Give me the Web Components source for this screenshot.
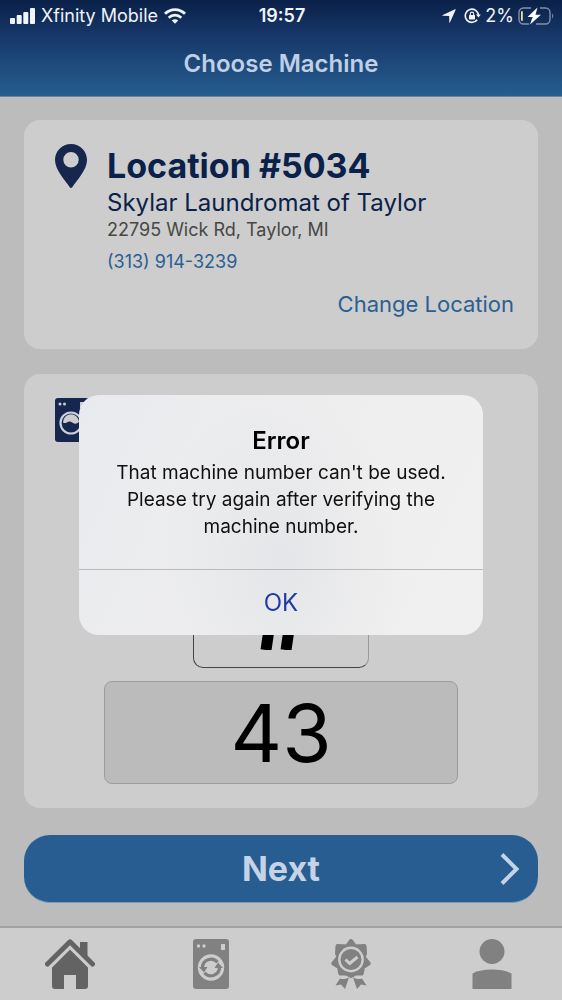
<!DOCTYPE html>
<html lang="en">
<head>
<meta charset="utf-8">
<meta name="viewport" content="width=device-width, initial-scale=1">
<title>Choose Machine</title>
<style>
  html, body { margin: 0; }
  body { font-family: Inter, "Liberation Sans", sans-serif; background: #bcbcbc; color: #0a2149; }
</style>
</head>
<body>
<laundry-app></laundry-app>
<script>
const define = (name, html) => {
  const template = document.createElement('template');
  template.innerHTML = html;
  customElements.define(name, class extends HTMLElement {
    constructor() {
      super();
      this.attachShadow({ mode: 'open' }).append(template.content.cloneNode(true));
    }
  });
};

define('status-bar', `
<style>
  :host { display: grid; grid-template-columns: 1fr auto 1fr; align-items: center; height: 32px; padding: 0 8px 0 10px; color: #f1f4f9; font-size: 18px; line-height: 24px; }
  div { display: flex; align-items: center; gap: 6px; }
  .right { justify-content: flex-end; gap: 4px; }
  .right svg:first-child { margin-right: 4px; }
  time { font-weight: 600; }
  svg { display: block; }
</style>
<div>
  <svg width="25" height="16" viewBox="0 0 25 16" fill="currentColor" aria-hidden="true"><rect y="10" width="5" height="6" rx="1"/><rect x="6.700" y="7" width="5" height="9" rx="1"/><rect x="13.300" y="4" width="5" height="12" rx="1"/><rect x="20" width="5" height="16" rx="1"/></svg>
  <span>Xfinity Mobile</span>
  <svg width="22" height="16" viewBox="0 0 22 16" fill="none" stroke="currentColor" stroke-width="2.800" aria-hidden="true"><path d="M1 5.800C6.700.2 15.300.2 21 5.800"/><path d="M4.700 9.700c3.700-3.400 8.900-3.400 12.600 0"/><path d="M7.800 12.400c1.900-1.700 4.500-1.700 6.400 0L11 15.800z" fill="currentColor" stroke="none"/></svg>
</div>
<time>19:57</time>
<div class="right">
  <svg width="14" height="14" viewBox="0 0 14 14" fill="currentColor" aria-hidden="true"><path d="M13.700.8 8 13.200q-.5 1-.7 0L7.200 6.900 1 6.800q-1.300-.1-.2-.8L13 .2q1-.3.700.6z"/></svg>
  <svg width="17" height="16" viewBox="0 0 17 16" fill="none" stroke="currentColor" stroke-width="1.600" aria-hidden="true"><path d="M13.200 11.700A6.600 6.600 0 1 1 14.500 7.500"/><path d="m12 6.500 2.500 3 2.300-3z" fill="currentColor" stroke="none"/><rect x="5" y="7" width="6" height="4.500" rx=".6" fill="currentColor" stroke="none"/><path d="M6.300 7.200V5.800a1.700 1.700 0 0 1 3.400 0v1.400" stroke-width="1.100"/></svg>
  <span>2%</span>
  <svg width="36" height="18" viewBox="0 0 36 18" aria-hidden="true"><path d="M13 1H5.500A4.500 4.500 0 0 0 1 5.500v7A4.500 4.500 0 0 0 5.500 17H11M22 1h5.500A4.500 4.500 0 0 1 32 5.500v7a4.500 4.500 0 0 1-4.500 4.500H18" fill="none" stroke="#8290a7" stroke-width="1.400"/><path d="M34.200 6.500c1.500.8 1.500 4.200 0 5z" fill="#8290a7"/><rect x="3" y="4" width="1.800" height="10" rx=".9" fill="#f0e09a"/><path d="M19.500.5 9.500 10h5.200L12 17.500 23 7.800h-5.500z" fill="#fff"/></svg>
</div>`);

define('app-header', `
<style>
  :host { display: block; background: linear-gradient(#0a2048, #17386a 38%, #265d8f); border-bottom: 1px solid #6f8296; }
  h1 { margin: 0; height: 64px; display: grid; place-items: center; color: #bfd0e6; font-size: 24px; line-height: 32px; font-weight: 600; }
</style>
<status-bar></status-bar>
<h1><slot></slot></h1>`);

define('app-card', `
<style>
  :host { display: block; box-sizing: border-box; background: #cdcdcd; border-radius: 16px; padding: 24px; }
</style>
<slot></slot>`);

define('location-details', `
<style>
  :host { display: grid; grid-template-columns: 32px 1fr; column-gap: 20px; padding: 0 0 7px 7px; }
  svg { display: block; }
  h2 { margin: 0; font-size: 34px; line-height: 44px; font-weight: 700; color: #0a2149; }
  p { margin: 0; }
  .name { font-size: 24px; line-height: 30px; }
  .street { font-size: 18px; line-height: 24px; color: #474747; }
  a { color: #2a5f92; text-decoration: none; }
  .phone { display: block; margin-top: 8px; font-size: 18px; line-height: 24px; }
  .change { grid-column: 1 / -1; justify-self: end; margin-top: 16px; font-size: 22px; line-height: 28px; }
</style>
<svg width="32" height="44" viewBox="0 0 32 44" aria-hidden="true"><path fill="#16264f" fill-rule="evenodd" d="M16 0C7 0 0 7 0 16c0 9.500 9.500 19.500 14.600 27q1.400 2 2.800 0C22.500 35.500 32 25.500 32 16 32 7 25 0 16 0zm0 8a7.700 7.700 0 1 1 0 15.400A7.700 7.700 0 0 1 16 8z"/></svg>
<div>
  <h2>Location #5034</h2>
  <p class="name">Skylar Laundromat of Taylor</p>
  <p class="street">22795 Wick Rd, Taylor, MI</p>
  <a class="phone" href="tel:+13139143239">(313) 914-3239</a>
</div>
<a class="change" href="#locations">Change Location</a>`);

define('machine-entry', `
<style>
  :host { display: flex; flex-direction: column; align-items: center; }
  svg { display: block; }
  .washer { align-self: flex-start; margin-left: 7px; }
  .mark { box-sizing: border-box; width: 176px; height: 176px; margin-top: 50px; border: 1px solid #444; border-right-color: #999; border-radius: 10px; display: flex; flex-direction: column; align-items: center; justify-content: flex-end; padding-bottom: 17px; }
  input { box-sizing: border-box; width: 354px; max-width: 100%; height: 103px; margin: 13px 0 0; padding: 0; border: 1px solid #9c9c9c; border-radius: 8px; background: #bbb; color: #000; font: 400 80px/96px Inter, "Liberation Sans", sans-serif; text-align: center; outline: 0; }
</style>
<svg class="washer" width="36" height="44" viewBox="0 0 36 44" aria-hidden="true"><rect width="36" height="44" rx="3" fill="#16264f"/><circle cx="5" cy="6" r="1.500" fill="#cdcdcd"/><circle cx="9.500" cy="6" r="1.500" fill="#cdcdcd"/><path d="M25 4h5v6h-5z" fill="#cdcdcd"/><circle cx="16" cy="25" r="10.500" fill="none" stroke="#cbd0de" stroke-width="2.200"/><path d="M8 24.500a8 8 0 0 1 16-.5c-4 3.500-6 .5-9-.5-2.500-.5-4 3-7 1z" fill="#cdcdcd"/></svg>
<div class="mark">
  <svg width="68" height="68" viewBox="0 0 68 68" stroke="#000" stroke-width="11" aria-hidden="true"><path d="M29 0 19 68M49 0 39 68M6 20h58M2 43h58"/></svg>
</div>
<input type="text" inputmode="numeric" aria-label="Machine number" value="43">`);

define('next-button', `
<style>
  :host { display: block; }
  button { box-sizing: border-box; width: 100%; height: 68px; border: 0; border-bottom: 1px solid #7b9cbd; border-radius: 26px; background: #275d91; color: #c5d3e6; padding: 0 18px; display: grid; grid-template-columns: 20px 1fr 20px; align-items: center; font: 700 34px/44px Inter, "Liberation Sans", sans-serif; }
  span { grid-column: 2; }
</style>
<button type="button"><span><slot></slot></span><svg width="20" height="34" viewBox="0 0 20 34" fill="none" stroke="currentColor" stroke-width="4" aria-hidden="true"><path d="m2 2.500 14.500 14.500L2 31.500"/></svg></button>`);

define('tab-bar', `
<style>
  :host { display: block; border-top: 2px solid #a3a3a3; background: #cdcdcd; }
  nav { display: grid; grid-template-columns: repeat(4, 1fr); height: 72px; align-items: center; }
  a { display: grid; place-items: center; color: #818181; }
  a[aria-current] { color: #636363; }
  svg { display: block; }
</style>
<nav aria-label="Main">
  <a href="#home" aria-label="Home" aria-current="page"><svg width="50" height="50" viewBox="0 0 50 50" fill="currentColor"><path d="M25 9.500 43 27v20q0 3-3 3h-9V36H19v14h-9q-3 0-3-3V27z"/><path d="M2.500 27.500 25 5l22.500 22.500" fill="none" stroke="#cdcdcd" stroke-width="8"/><path d="M35 3h7.500v17L35 12.500z"/><path d="M2.500 25 25 2.800 47.500 25" fill="none" stroke="currentColor" stroke-width="5" stroke-linecap="round" stroke-linejoin="round"/></svg></a>
  <a href="#machines" aria-label="Machines"><svg width="36" height="50" viewBox="0 0 36 50" fill="currentColor"><rect width="36" height="50" rx="3"/><g fill="#cdcdcd"><circle cx="5.500" cy="7" r="1.700"/><circle cx="11" cy="7" r="1.700"/><path d="M28 5h4v6h-4z"/><circle cx="18" cy="28.500" r="13.200"/></g><g fill="none" stroke="currentColor" stroke-width="3.200"><path d="M9.500 29a8.500 8.500 0 0 1 15-5.700M26.500 28a8.500 8.500 0 0 1-15 5.700"/></g><path d="M6 28h8.500l-3.500 5.500zM30 29h-8.500l3.500-5.500z"/></svg></a>
  <a href="#rewards" aria-label="Rewards"><svg width="40" height="50" viewBox="0 0 40 50" fill="currentColor"><g stroke="currentColor" stroke-width="4" stroke-linejoin="round"><path d="M20 2 24 7.500 33.500 7 34 14.500 32.500 18 37.700 24.500 32 28 30.700 34.500 24.500 34.500 20 37 15.500 34.500 9.300 34.500 8 28 2.300 24.500 7.500 18 6 14.500 6.500 7 16 7.500z"/></g><circle cx="20" cy="20.500" r="11.700" fill="none" stroke="#cdcdcd" stroke-width="2.400"/><path d="m14.500 20.500 4.200 4 7.800-6.500" fill="none" stroke="#cdcdcd" stroke-width="3"/><path d="M9 39.500q4 1.500 9-1L14 50l-4-4.500-5.500 1zM31 39.500q-4 1.500-9-1L26 50l4-4.500 5.500 1z"/></svg></a>
  <a href="#account" aria-label="Account"><svg width="40" height="50" viewBox="0 0 40 50" fill="currentColor"><circle cx="20" cy="12.500" r="12.500"/><path d="M.5 50V34.500C6 31.500 12 30.500 20 30.500s14 1 19.500 4V50z"/></svg></a>
</nav>`);

define('alert-dialog', `
<style>
  :host { position: fixed; inset: 0; display: grid; place-items: center; padding-top: 30px; box-sizing: border-box; }
  section { width: 404px; max-width: calc(100% - 32px); border-radius: 20px; overflow: hidden; color: #101010; text-align: center; background: radial-gradient(ellipse 30% 75% at 50% 70%, #e5e6e9, transparent), linear-gradient(115deg, #e9eaee, #efefef 60%, #f0f0f0); }
  .body { padding: 30px 32px; height: 174px; box-sizing: border-box; }
  h2 { margin: 0; font-size: 24px; line-height: 32px; font-weight: 600; color: #000; }
  p { margin: 2px 0 0; font-size: 19px; line-height: 27px; }
  button { display: block; width: 100%; height: 66px; padding: 0; border: 0; border-top: 1px solid #b9b9b9; background: none; color: #203ba6; font: 400 24px/32px Inter, "Liberation Sans", sans-serif; }
</style>
<section role="alertdialog" aria-modal="true" aria-labelledby="title" aria-describedby="message">
  <div class="body">
    <h2 id="title"><slot name="title"></slot></h2>
    <p id="message"><slot></slot></p>
  </div>
  <button type="button">OK</button>
</section>`);

define('laundry-app', `
<style>
  :host { display: flex; flex-direction: column; min-height: 100vh; }
  main { flex: 1; display: flex; flex-direction: column; gap: 25px; padding: 23px 24px; }
  next-button { margin-top: 2px; }
</style>
<app-header>Choose Machine</app-header>
<main>
  <app-card><location-details></location-details></app-card>
  <app-card><machine-entry></machine-entry></app-card>
  <next-button>Next</next-button>
</main>
<tab-bar></tab-bar>
<alert-dialog><span slot="title">Error</span>That machine number can't be used. Please try again after verifying the machine number.</alert-dialog>`);
</script>
</body>
</html>
